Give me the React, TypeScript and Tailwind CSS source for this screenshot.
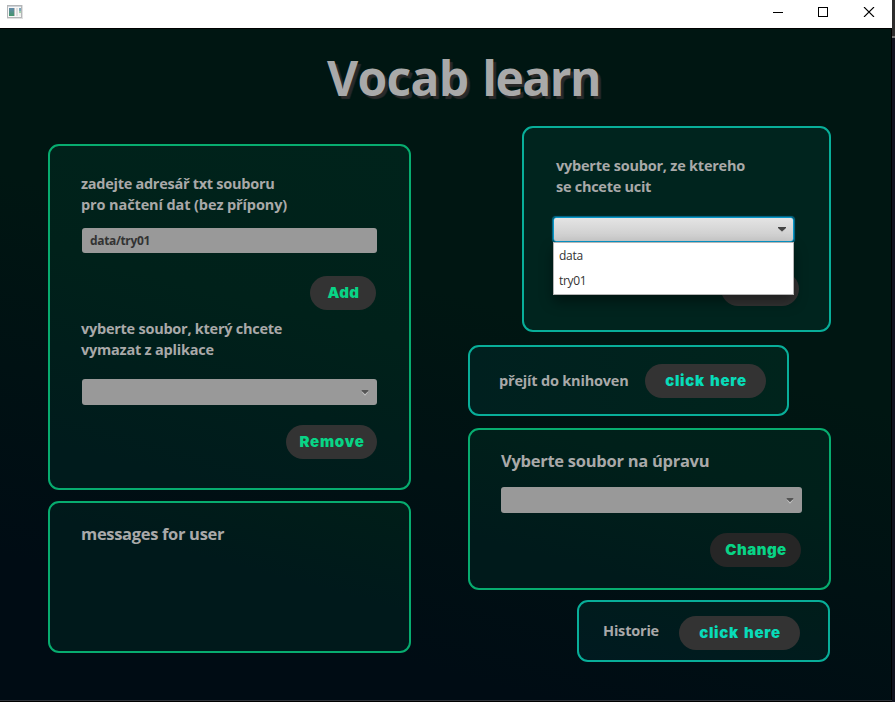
import type { ReactNode } from 'react';

function Arrow({ size = 'small' }: { size?: 'small' | 'large' }) {
  return (
    <svg width="8" height="6" viewBox="0 0 8 6" className="mt-px shrink-0">
      <path d="M0.5 1.5h7L4 5.8z" fill="#c8c8c8" />
      <path d={size === 'large' ? 'M0 0h8v1L4 4.6 0 1z' : 'M0.7 0h6.6v1L4 4.2 0.7 1z'} fill={size === 'large' ? '#444' : '#555'} />
    </svg>
  );
}

function Card({ className, children }: { className: string; children: ReactNode }) {
  return <section className={`shrink-0 rounded-[11px] border-2 ${className}`}>{children}</section>;
}

function Pill({ className, children }: { className: string; children: ReactNode }) {
  return (
    <button
      className={`flex h-[34px] shrink-0 items-center justify-center rounded-full pb-px pl-px font-[Inter,sans-serif] text-[15px] leading-none font-black whitespace-nowrap ${className}`}
    >
      {children}
    </button>
  );
}

export default function App() {
  return (
    <div className="flex h-[702px] w-[895px] overflow-hidden bg-[#151821] font-['Open_Sans','Noto_Sans',sans-serif]">
      <div className="flex w-[892px] shrink-0 flex-col">
        <header className="flex h-7 shrink-0 items-start justify-between bg-white">
          <svg width="17" height="15" viewBox="0 0 17 15" className="mt-[5px] ml-[7px]">
            <defs>
              <linearGradient id="tile" x1="0" y1="0" x2="0" y2="1">
                <stop offset="0" stopColor="#6289aa" />
                <stop offset="1" stopColor="#44966b" />
              </linearGradient>
            </defs>
            <rect x="0" y="0" width="16" height="14" fill="#e0e0e0" />
            <rect x="0.5" y="0.5" width="14" height="12" fill="#f7f7f7" stroke="#b4b6b8" />
            <rect x="1" y="1" width="13" height="1" fill="#cdd2d8" />
            <rect x="2" y="3" width="5" height="8" fill="url(#tile)" />
            <rect x="7" y="3" width="1" height="8" fill="#bdbdbd" />
            <rect x="9" y="3" width="2" height="8" fill="#dedede" />
            <rect x="12" y="3" width="2" height="3" fill="#7fa8bb" />
            <rect x="12" y="6" width="2" height="2" fill="#a5d0ae" />
            <rect x="12" y="8" width="2" height="3" fill="#eef0ec" />
          </svg>
          <div className="mt-[7px] mr-[17px] flex gap-[35px]">
            <svg width="10" height="10"><path d="M0 5.5h10" stroke="#000" /></svg>
            <svg width="10" height="10"><rect x="0.5" y="0.5" width="9" height="9" fill="none" stroke="#000" /></svg>
            <svg width="12" height="10" viewBox="0 0 12 10"><path d="M1 0l10 10M11 0l-10 10" stroke="#000" strokeWidth="1.1" /></svg>
          </div>
        </header>

        <div className="flex h-[672px] shrink-0 border-t border-r border-black bg-[linear-gradient(195deg,#001612_0%,#001612_42%,#000c14_84%,#000c14_100%)] text-[#a9a9a9]">
          <main className="flex w-full flex-col">
            <h1 className="mt-[22px] ml-[327px] h-[56px] text-[48px] leading-[54px] font-bold tracking-[-0.7px] whitespace-nowrap [text-shadow:3px_3px_1px_#2a2a2a]">
              Vocab <span className="ml-[2px] tracking-[-1.5px]">learn</span>
            </h1>
            <div className="flex">
              <div className="mt-[37px] ml-12 flex w-[363px] shrink-0 flex-col gap-[11px]">
                <Card className="flex h-[346px] flex-col border-[#07ac6f] bg-[linear-gradient(195deg,#00231b_0%,#00211a_45%,#001b1c_90%)] pt-[27px] pr-8 pl-[31px]">
                  <p className="text-[14.5px] leading-[21px] font-bold whitespace-nowrap">
                    <span className="tracking-[-0.27px]">zadejte adresář txt souboru</span>
                    <br />
                    <span className="tracking-[-0.11px]">pro načtení dat (bez přípony)</span>
                  </p>
                  <div className="mt-[13px] ml-px flex h-[25px] w-[295px] items-center rounded-[3px] bg-[#999] pl-2 text-[12px] font-bold tracking-[-0.35px] text-[#333]">
                    data/try01
                  </div>
                  <Pill className="mt-[23px] ml-[229px] w-[66px] bg-[#333] tracking-[0.4px] text-[#08d486]">Add</Pill>
                  <p className="mt-2 text-[14.5px] leading-[21px] font-bold tracking-[-0.25px] whitespace-nowrap">
                    vyberte soubor, který chcete
                    <br />
                    <span className="tracking-[-0.22px]">vymazat z aplikace</span>
                  </p>
                  <div className="mt-[19px] ml-px flex h-[26px] w-[295px] items-center justify-end rounded-[3px] bg-[#999] pr-2">
                    <Arrow />
                  </div>
                  <Pill className="mt-5 ml-[205px] w-[91px] bg-[#333] tracking-[0.75px] text-[#08d486]">Remove</Pill>
                </Card>
                <Card className="h-[152px] border-[#07ac6f] bg-[linear-gradient(195deg,#001e18_0%,#00191b_45%,#00191b_100%)] pt-[19px] pl-[31px]">
                  <p className="text-[16.5px] leading-[24px] font-bold tracking-[-0.32px] whitespace-nowrap">messages for user</p>
                </Card>
              </div>

              <div className="mt-[19px] ml-[57px] flex w-[363px] shrink-0 flex-col">
                <Card className="ml-[54px] flex h-[206px] w-[309px] flex-col border-[#08ae99] bg-[#00241e] pt-[27px] pl-[29px]">
                  <p className="ml-[3px] text-[14.5px] leading-[21px] font-bold tracking-[-0.22px] whitespace-nowrap">
                    vyberte soubor, ze ktereho
                    <br />
                    <span className="tracking-[-0.27px]">se chcete ucit</span>
                  </p>
                  <div className="relative mt-[20px] h-[25px] w-[241px]">
                    <div className="flex h-[25px] items-center justify-end rounded-[3px] border border-[#0796c8] bg-[linear-gradient(#e4e4e4,#c9c9c9)] pr-[7px] shadow-[0_0_1px_1px_#066c8c]">
                      <Arrow size="large" />
                    </div>
                    <ul className="absolute top-[25px] left-0 z-10 h-[53px] w-[241px] border border-[#b5b5b5] bg-white pl-[5px] text-[12px] leading-[25px] tracking-[-0.3px] text-[#333] shadow-[0_7px_12px_rgba(0,0,0,0.4)]">
                      <li>data</li>
                      <li>try01</li>
                    </ul>
                  </div>
                  <div className="mt-[30px] ml-[168px] h-[34px] w-[78px] rounded-full bg-[#333]" />
                </Card>

                <Card className="mt-[13px] flex h-[71px] w-[321px] items-start border-[#08ae99] bg-[linear-gradient(90deg,#00201f,#00241c)] pt-[17px] pl-[29px]">
                  <span className="w-[146px] text-[14.5px] leading-[34px] font-bold tracking-[-0.19px] whitespace-nowrap">přejít do knihoven</span>
                  <Pill className="w-[121px] bg-[#333] tracking-[0.7px] text-[#08dbb9] [word-spacing:1.5px]">click here</Pill>
                </Card>

                <Card className="mt-3 flex h-[162px] flex-col border-[#07ac6f] bg-[linear-gradient(195deg,#00211a_0%,#00201a_30%,#001a1b_80%)] pt-[19px] pl-[31px]">
                  <p className="text-[16.5px] leading-[24px] font-bold tracking-[-0.27px] whitespace-nowrap">Vyberte soubor na úpravu</p>
                  <div className="mt-[14px] flex h-[26px] w-[301px] items-center justify-end rounded-[3px] bg-[#999] pr-2">
                    <Arrow />
                  </div>
                  <Pill className="mt-5 ml-[209px] w-[91px] bg-[#262626] tracking-[0.5px] text-[#08d486]">Change</Pill>
                </Card>

                <Card className="mt-[10px] ml-[109px] flex h-[62px] w-[253px] items-start border-[#08ae99] bg-[linear-gradient(195deg,#001d1a,#001a20)] pt-[14px] pl-6">
                  <span className="w-[76px] text-[14.5px] leading-[30px] font-bold tracking-[-0.2px]">Historie</span>
                  <Pill className="w-[121px] bg-[#333] tracking-[0.7px] text-[#08dbb9] [word-spacing:1.5px]">click here</Pill>
                </Card>
              </div>
            </div>
          </main>
        </div>
        <div className="h-[2px] border-t border-[#30343a] bg-black" />
      </div>
      <aside className="flex w-[3px] flex-col">
        <div className="h-9 bg-[#2d2d2d]" />
        <div className="h-[2px] bg-[#777]" />
        <div className="grow bg-[#11131f]" />
      </aside>
    </div>
  );
}
